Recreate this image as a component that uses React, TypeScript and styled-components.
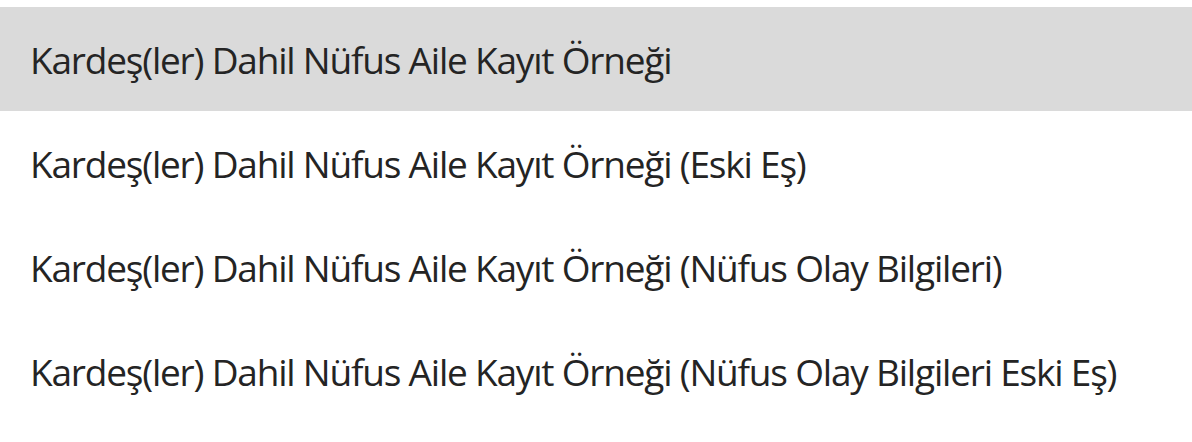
import React from "react";
import styled, { createGlobalStyle } from "styled-components";

const GlobalStyle = createGlobalStyle`
    html, body {
        margin: 0;
        padding: 0;
        background: #ffffff;
    }
`;

const items = [
    "Kardeş(ler) Dahil Nüfus Aile Kayıt Örneği",
    "Kardeş(ler) Dahil Nüfus Aile Kayıt Örneği (Eski Eş)",
    "Kardeş(ler) Dahil Nüfus Aile Kayıt Örneği (Nüfus Olay Bilgileri)",
    "Kardeş(ler) Dahil Nüfus Aile Kayıt Örneği (Nüfus Olay Bilgileri Eski Eş)",
];

export default function App() {
    return (
        <>
            <GlobalStyle />
            <List>
                {items.map((label, i) => (
                    <Option key={label} $active={i === 0}>
                        {label}
                    </Option>
                ))}
            </List>
        </>
    );
}

const List = styled.ul`
    list-style: none;
    margin: 0;
    padding: 7px 0 0;
    display: flex;
    flex-direction: column;
`;

const Option = styled.li<{ $active?: boolean }>`
    height: 104px;
    display: flex;
    align-items: center;
    padding-left: 30px;
    background: ${p => (p.$active ? "#dadada" : "transparent")};
    color: #242424;
    font-family: "Open Sans", "Noto Sans", sans-serif;
    font-weight: 400;
    font-size: 37px;
    letter-spacing: -1.2px;
    white-space: nowrap;
`;
